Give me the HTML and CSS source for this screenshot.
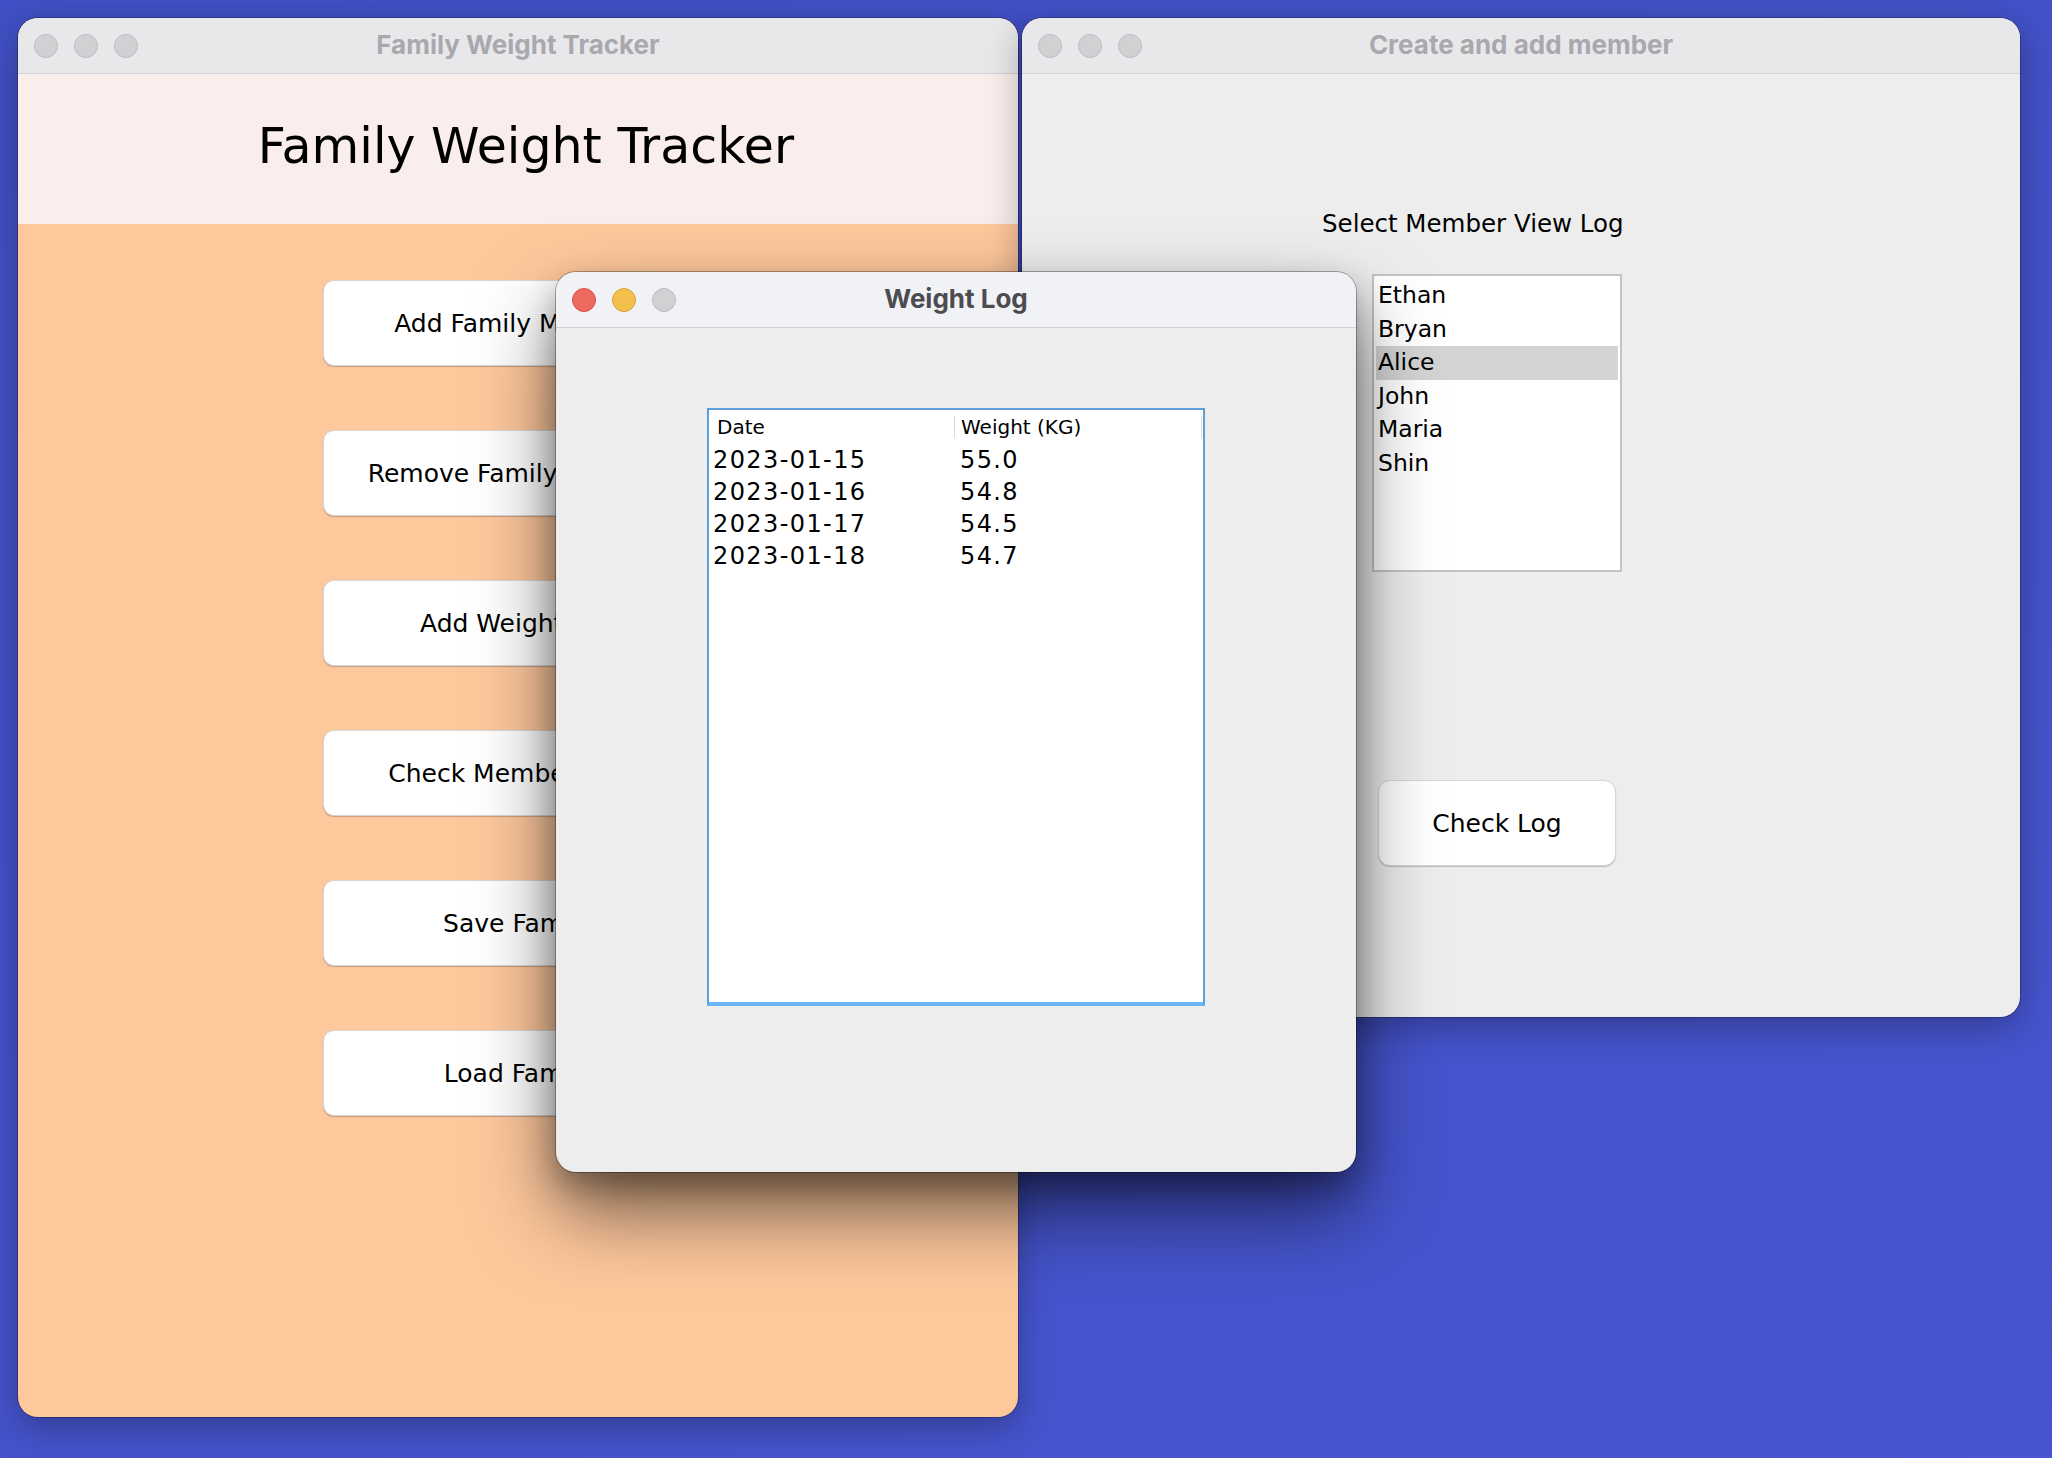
FILE: index.html
```html
<!DOCTYPE html>
<html>
<head>
  <title>Family Weight Tracker</title>
  <link rel="stylesheet" href="styles.css">
</head>
<body>
  <div class="desktop">

    <div class="window main-window">
      <div class="titlebar">
        <div class="lights">
          <span class="light"></span>
          <span class="light"></span>
          <span class="light"></span>
        </div>
        <div class="title">Family Weight Tracker</div>
      </div>
      <div class="main-header">
        <h1>Family Weight Tracker</h1>
      </div>
      <div class="main-buttons">
        <button class="app-button">Add Family Member</button>
        <button class="app-button">Remove Family Member</button>
        <button class="app-button">Add Weight Log</button>
        <button class="app-button">Check Member Stats</button>
        <button class="app-button">Save Family</button>
        <button class="app-button">Load Family</button>
      </div>
    </div>

    <div class="window member-window">
      <div class="titlebar">
        <div class="lights">
          <span class="light"></span>
          <span class="light"></span>
          <span class="light"></span>
        </div>
        <div class="title">Create and add member</div>
      </div>
      <div class="member-body">
        <p class="member-label">Select Member View Log</p>
        <ul class="member-list">
          <li>Ethan</li>
          <li>Bryan</li>
          <li class="selected">Alice</li>
          <li>John</li>
          <li>Maria</li>
          <li>Shin</li>
        </ul>
        <button class="app-button check-button">Check Log</button>
      </div>
    </div>

    <div class="window log-window active">
      <div class="titlebar">
        <div class="lights">
          <span class="light close"></span>
          <span class="light minimize"></span>
          <span class="light"></span>
        </div>
        <div class="title">Weight Log</div>
      </div>
      <div class="log-body">
        <div class="log-table">
          <div class="log-head">
            <div class="head-cell">Date</div>
            <div class="head-cell">Weight (KG)</div>
          </div>
          <div class="log-row"><span>2023-01-15</span><span>55.0</span></div>
          <div class="log-row"><span>2023-01-16</span><span>54.8</span></div>
          <div class="log-row"><span>2023-01-17</span><span>54.5</span></div>
          <div class="log-row"><span>2023-01-18</span><span>54.7</span></div>
        </div>
      </div>
    </div>

  </div>
</body>
</html>
```

FILE: styles.css
```css
body {
  margin: 0;
  font-family: "DejaVu Sans", Verdana, sans-serif;
  color: #000;
}

.desktop {
  position: relative;
  width: 2052px;
  height: 1458px;
  overflow: hidden;
  background: linear-gradient(160deg, #4150c5 0%, #4553cb 60%, #4756d0 100%);
}

/* windows sit on the desktop at their own spots */
.window {
  position: absolute;
  display: flex;
  flex-direction: column;
  border-radius: 20px;
  overflow: hidden;
  box-shadow: 0 0 0 1px rgba(0, 0, 0, 0.25), 0 10px 36px rgba(0, 0, 0, 0.3);
}

.main-window {
  left: 18px;
  top: 18px;
  width: 1000px;
  height: 1399px;
  background-color: #fec89d;
}

.member-window {
  left: 1022px;
  top: 18px;
  width: 998px;
  height: 999px;
  background-color: #ededed;
}

.log-window {
  left: 556px;
  top: 272px;
  width: 800px;
  height: 900px;
  background-color: #ededed;
  box-shadow: 0 0 0 1px rgba(0, 0, 0, 0.3), 0 14px 30px rgba(0, 0, 0, 0.28), 0 40px 80px rgba(0, 0, 0, 0.55);
}

.titlebar {
  display: grid;
  grid-template-columns: 1fr auto 1fr;
  align-items: center;
  height: 55px;
  flex-shrink: 0;
  background-color: #e8e8eb;
  border-bottom: 1px solid #d2d2d5;
}

.active .titlebar {
  background-color: #f1f2f6;
}

.lights {
  display: flex;
  gap: 16px;
  padding-left: 16px;
}

.light {
  width: 22px;
  height: 22px;
  border-radius: 50%;
  background-color: #d1d1d4;
  border: 1px solid #bcbcc0;
}

.light.close {
  background-color: #ed6a5e;
  border-color: #d35246;
}

.light.minimize {
  background-color: #f5bf4f;
  border-color: #d8a13a;
}

.title {
  margin-top: -2px;
  font-family: Inter, "Liberation Sans", sans-serif;
  font-weight: 700;
  font-size: 26px;
  color: #a9a9ad;
}

.active .title {
  color: #4b4b50;
}

/* main window */
.main-header {
  height: 150px;
  flex-shrink: 0;
  display: flex;
  align-items: center;
  justify-content: center;
  background-color: #f9eeeb;
}

.main-header h1 {
  margin: 0 0 6px 16px;
  font-size: 49px;
  font-weight: normal;
}

.main-buttons {
  display: flex;
  flex-direction: column;
  align-items: center;
  gap: 64px;
  padding-top: 56px;
}

.app-button {
  width: 390px;
  height: 86px;
  padding: 0;
  font-family: "DejaVu Sans", Verdana, sans-serif;
  font-size: 25px;
  color: #000;
  background-color: #fff;
  border: 1px solid #d7d7d7;
  border-radius: 11px;
  box-shadow: 0 1px 1px rgba(0, 0, 0, 0.22);
}

/* member window */
.member-body {
  display: flex;
  flex-direction: column;
  align-items: flex-start;
  padding: 135px 0 0 300px;
}

.member-label {
  margin: 0;
  font-size: 24.5px;
  line-height: 30px;
}

.member-list {
  list-style: none;
  margin: 35px 0 0 50px;
  padding: 3px 2px;
  width: 242px;
  height: 288px;
  background-color: #fff;
  border: 2px solid #c4c4c4;
  font-size: 23.5px;
  line-height: 33.6px;
}

.member-list li {
  padding-left: 2px;
}

.member-list .selected {
  background-color: #d4d4d4;
}

.check-button {
  width: 238px;
  margin: 208px 0 0 56px;
  border-radius: 12px;
}

/* weight log window */
.log-body {
  display: flex;
  justify-content: center;
  padding-top: 80px;
}

.log-table {
  width: 494px;
  height: 592px;
  background-color: #fff;
  border: 2px solid #5c9fdb;
  border-bottom: 4px solid #69b4f1;
}

.log-head {
  display: grid;
  grid-template-columns: 246px 247px;
  height: 34px;
  align-items: center;
  font-size: 20px;
}

.head-cell {
  padding-left: 8px;
  border-right: 1px solid #dadada;
  line-height: 22px;
}

.head-cell + .head-cell {
  padding-left: 6px;
}

.log-row {
  display: grid;
  grid-template-columns: 247px 1fr;
  height: 32px;
  line-height: 32px;
  font-size: 24px;
  letter-spacing: 1.4px;
}

.log-row span {
  padding-left: 4px;
}
```
